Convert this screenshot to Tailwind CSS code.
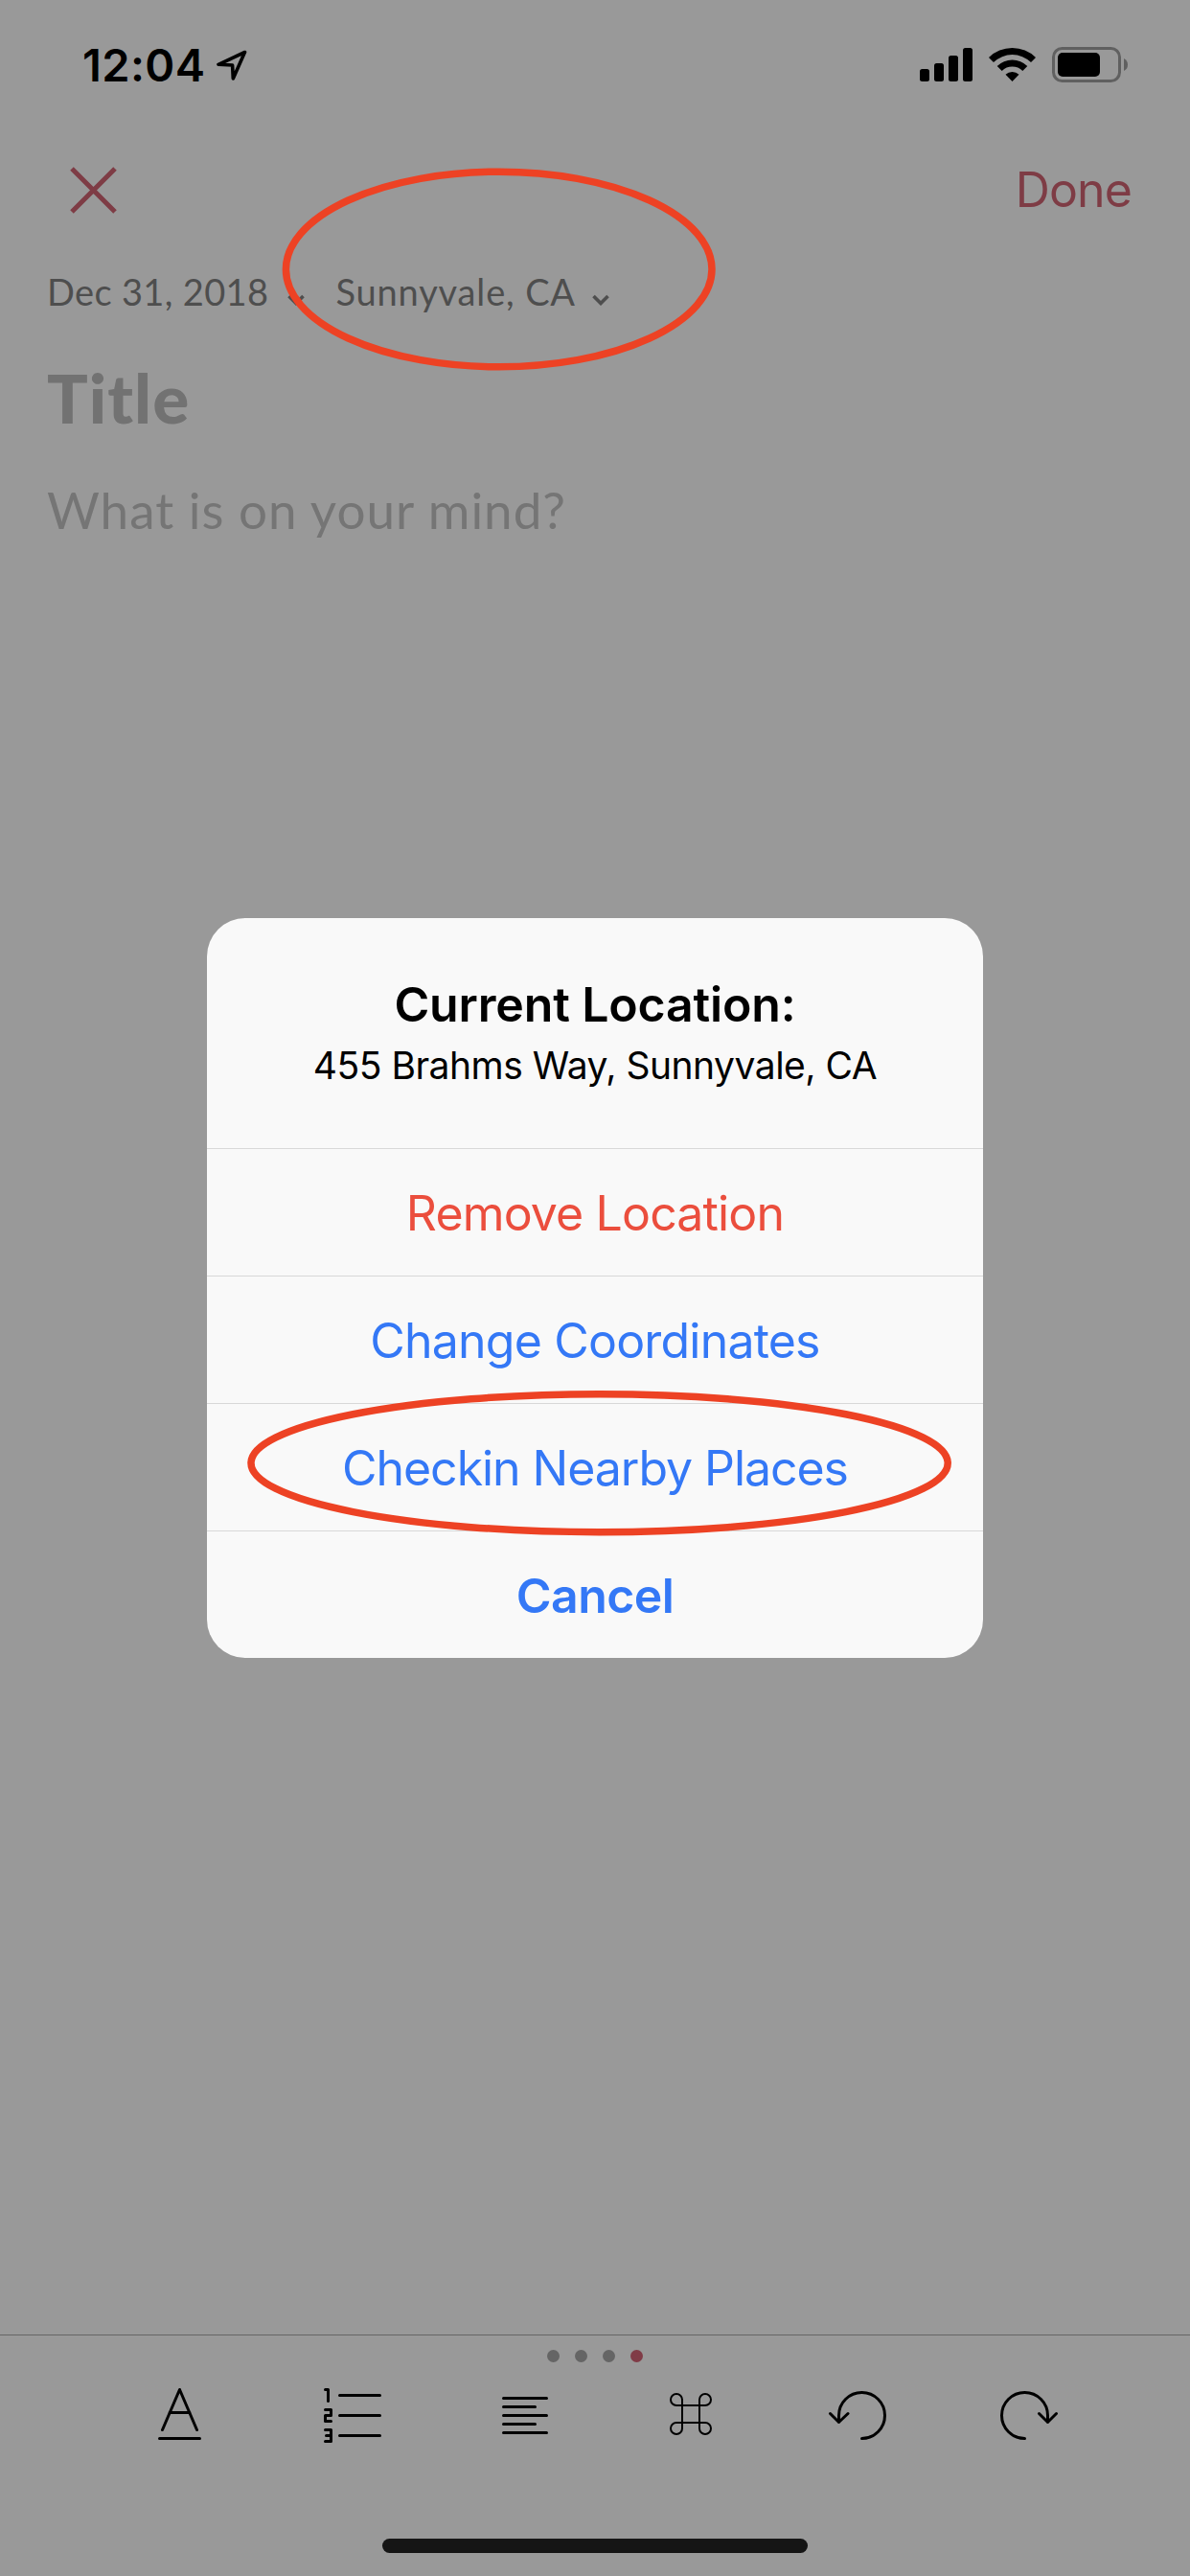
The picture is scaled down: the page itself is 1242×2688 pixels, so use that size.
<!DOCTYPE html>
<html lang="en">
<head>
<meta charset="utf-8">
<title>Journal entry</title>
<script src="https://cdn.jsdelivr.net/npm/@tailwindcss/browser@4"></script>
</head>
<body class="bg-[#999999]">
<div class="relative w-[1242px] h-[2688px] overflow-hidden bg-[#999999] flex flex-col font-['Inter',sans-serif] text-black">

  <!-- Status bar -->
  <header class="h-[132px] flex items-start justify-between pl-[86px] pr-[65px] pt-[38px]">
    <div class="flex items-center gap-[11px] h-[60px]">
      <span class="text-[47px] leading-[60px] font-semibold whitespace-nowrap tracking-[0.4px]">12:04</span>
      <svg class="w-[34px] h-[34px]" viewBox="0 0 34 34" fill="none" stroke="black" stroke-width="3.6" stroke-linejoin="round"><path d="M30.5 3.5 L3 16.3 L17.6 17 L18.3 31 Z"/></svg>
    </div>
    <svg class="w-[217px] h-[60px]" viewBox="960 38 217 60">
      <rect x="960" y="72" width="10" height="13" rx="2.5"/><rect x="975" y="66" width="10" height="19" rx="2.5"/><rect x="990" y="58" width="10" height="27" rx="2.5"/><rect x="1005" y="50" width="10" height="35" rx="2.5"/>
      <path d="M1032 60 A35 35 0 0 1 1081 60 L1076 65 A28 28 0 0 0 1037 65 Z"/>
      <path d="M1040.700 69 A22.500 22.500 0 0 1 1072.300 69 L1067.300 74 A15.500 15.500 0 0 0 1045.700 74 Z"/>
      <path d="M1049.500 77.700 A10.500 10.500 0 0 1 1063.500 77.700 L1056.500 85 Z"/>
      <rect x="1099.500" y="50.500" width="69" height="34" rx="9" fill="none" stroke="#606060" stroke-width="3"/>
      <rect x="1104" y="55" width="44" height="25" rx="5"/>
      <path d="M1173 61 Q1177 63 1177 67.500 Q1177 72 1173 74 Z" fill="#606060"/>
    </svg>
  </header>

  <!-- Navigation -->
  <nav class="h-[132px] flex items-center justify-between pl-[73px] pr-[61px] text-[#7e3c45]">
    <svg class="w-[49px] h-[49px]" viewBox="0 0 49 49" stroke="currentColor" stroke-width="5"><path d="M2 2 L47 47 M47 2 L2 47"/></svg>
    <span class="text-[50px] leading-[60px] tracking-[-0.9px]">Done</span>
  </nav>

  <!-- Entry -->
  <main class="flex-1 flex flex-col pl-[49px] font-['Lato',sans-serif]">
    <div class="h-[80px] flex items-center text-[38px] leading-[80px] text-[#4e4e4e] whitespace-nowrap">
      <span class="tracking-[0.35px]">Dec 31, 2018</span>
      <svg class="w-[18px] h-[12px] ml-[20px] mt-[18px]" viewBox="0 0 18 12" fill="none" stroke="currentColor" stroke-width="3.600"><path d="M1.500 2 L9 9.500 L16.500 2"/></svg>
      <span class="ml-[32px] tracking-[0.85px]">Sunnyvale, CA</span>
      <svg class="w-[18px] h-[12px] ml-[17px] mt-[18px]" viewBox="0 0 18 12" fill="none" stroke="currentColor" stroke-width="3.600"><path d="M1.500 2 L9 9.500 L16.500 2"/></svg>
    </div>
    <h1 class="mt-[31px] h-[80px] text-[71px] leading-[80px] font-black text-[#727272]"><span class="tracking-[1.1px]">Title</span></h1>
    <p class="mt-[41px] h-[72px] text-[53px] leading-[72px] text-[#757575]"><span class="tracking-[1px]">What is on your mind?</span></p>
  </main>

  <!-- Formatting toolbar -->
  <footer class="h-[252px] border-t border-[#666666] flex flex-col items-center">
    <div class="mt-[15px] flex gap-[16px]">
      <i class="size-[13px] rounded-full bg-[#656565]"></i><i class="size-[13px] rounded-full bg-[#656565]"></i><i class="size-[13px] rounded-full bg-[#656565]"></i><i class="size-[13px] rounded-full bg-[#803b46]"></i>
    </div>
    <div class="mt-[23px] w-full h-[66px] flex items-center pl-[162px]">
      <svg class="w-[51px] h-[66px]" viewBox="162 2488 51 66" fill="none" stroke="black" stroke-width="3" stroke-linecap="round" stroke-linejoin="round"><path d="M169.500 2535.500 L187.500 2493.500 L205.500 2535.500 M177 2517.500 H198 M166.500 2544.500 H208.500"/></svg>
      <svg class="ml-[122px] w-[66px] h-[66px]" viewBox="335 2488 66 66" fill="none" stroke="black" stroke-width="3" stroke-linecap="round" stroke-linejoin="round"><path d="M354.500 2499.500 H396.500 M354.500 2520.500 H396.500 M354.500 2541.500 H396.500 M339.500 2493.500 H342.500 V2505.500 M339.500 2514.500 H345.500 V2520.500 H339.500 V2526.500 H345.500 M339.500 2535.500 H345.500 V2547.500 H339.500 M340.500 2541.500 H345.500"/></svg>
      <svg class="ml-[120px] w-[54px] h-[66px]" viewBox="521 2488 54 66" fill="none" stroke="black" stroke-width="3" stroke-linecap="round"><path d="M525.500 2502.500 H570.500 M525.500 2511.500 H558.500 M525.500 2520.500 H570.500 M525.500 2529.500 H558.500 M525.500 2538.500 H570.500"/></svg>
      <svg class="ml-[121px] w-[50px] h-[66px]" viewBox="696 2488 50 66" fill="none" stroke="black" stroke-width="2"><path d="M712 2510 V2504 A6 6 0 1 0 706 2510 H736 A6 6 0 1 0 730 2504 V2534 A6 6 0 1 0 736 2528 H706 A6 6 0 1 0 712 2534 Z"/></svg>
      <svg class="ml-[117px] w-[65px] h-[66px]" viewBox="863 2488 65 66" fill="none" stroke="black" stroke-width="3" stroke-linecap="round" stroke-linejoin="round"><path d="M875.500 2527.500 V2520.500 A24 24 0 1 1 899.500 2544.500 M866.500 2518.500 L875.500 2527.500 L885 2518.500"/></svg>
      <svg class="ml-[113px] w-[66px] h-[66px]" viewBox="1041 2488 66 66" fill="none" stroke="black" stroke-width="3" stroke-linecap="round" stroke-linejoin="round"><path d="M1093.500 2527.500 V2520.500 A24 24 0 1 0 1069.500 2544.500 M1084.500 2518.500 L1093.500 2527.500 L1102.500 2518.500"/></svg>
    </div>
    <div class="mt-[95px] w-[444px] h-[15px] rounded-full bg-[#151515]"></div>
  </footer>

  <!-- Location alert -->
  <div class="absolute inset-0 flex items-center justify-center">
    <section class="w-[810px] h-[772px] rounded-[40px] bg-[#f9f9f9] flex flex-col text-center text-[50px] text-[#3478f6] whitespace-nowrap overflow-hidden">
      <div class="h-[240px] pt-[60px] text-black">
        <h2 class="text-[50px] leading-[60px] font-semibold"><span class="tracking-[-0.15px]">Current Location:</span></h2>
        <p class="mt-[9px] text-[39px] leading-[50px]"><span class="tracking-[-0.5px]">455 Brahms Way, Sunnyvale, CA</span></p>
      </div>
      <div class="h-[133px] border-t border-[#d8d8d8] leading-[134px] text-[#eb4e3d]"><span class="tracking-[-0.85px]">Remove Location</span></div>
      <div class="h-[133px] border-t border-[#d8d8d8] leading-[134px]"><span class="tracking-[-0.8px]">Change Coordinates</span></div>
      <div class="h-[133px] border-t border-[#d8d8d8] leading-[134px]"><span class="tracking-[-1.05px]">Checkin Nearby Places</span></div>
      <div class="h-[133px] border-t border-[#d8d8d8] leading-[134px] font-semibold"><span class="tracking-[-0.6px]">Cancel</span></div>
    </section>
  </div>

  <!-- Hand-drawn callouts -->
  <svg class="absolute inset-0 w-[1242px] h-[2688px]" viewBox="0 0 1242 2688" fill="none" stroke="#ed4224" stroke-width="7.500">
    <ellipse cx="520.700" cy="281" rx="222.300" ry="101.800"/>
    <ellipse cx="625.600" cy="1526.700" rx="363.600" ry="72"/>
  </svg>
</div>
</body>
</html>
